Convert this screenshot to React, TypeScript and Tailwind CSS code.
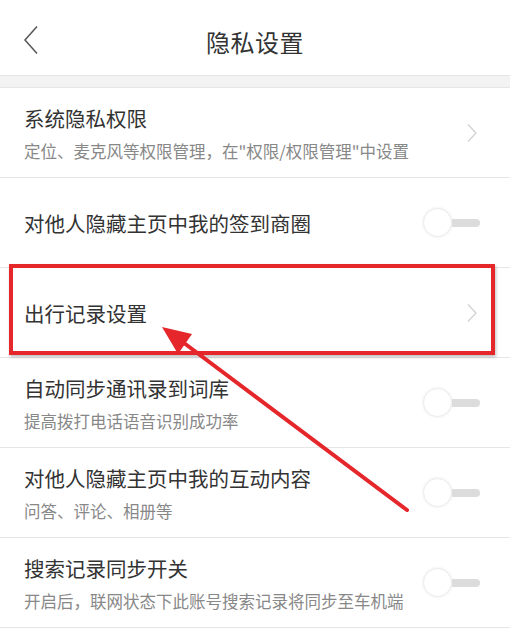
type Row = {
  title: string;
  desc?: string;
  kind: "link" | "toggle";
};

const rows: Row[] = [
  { title: "系统隐私权限", desc: '定位、麦克风等权限管理，在"权限/权限管理"中设置', kind: "link" },
  { title: "对他人隐藏主页中我的签到商圈", kind: "toggle" },
  { title: "出行记录设置", kind: "link" },
  { title: "自动同步通讯录到词库", desc: "提高拨打电话语音识别成功率", kind: "toggle" },
  { title: "对他人隐藏主页中我的互动内容", desc: "问答、评论、相册等", kind: "toggle" },
  { title: "搜索记录同步开关", desc: "开启后，联网状态下此账号搜索记录将同步至车机端", kind: "toggle" },
];

function Toggle() {
  return (
    <div className="flex items-center">
      <div className="h-[29px] w-[29px] rounded-full border border-[#ececec] bg-white shadow-[0_0_3px_rgba(0,0,0,0.08)]" />
      <div className="h-[8px] w-[28px] rounded-r-full bg-[#dcdcdc]" />
    </div>
  );
}

function Chevron() {
  return (
    <svg width="12" height="20" viewBox="0 0 12 20" fill="none" className="mr-[2px]">
      <polyline points="2,1.5 10,10 2,18.5" stroke="#d2d2d2" strokeWidth="1.3" />
    </svg>
  );
}

export default function App() {
  return (
    <div
      className="relative h-[628px] w-[510px] overflow-hidden bg-white"
      style={{ fontFamily: '"Noto Sans CJK SC", "Noto Sans", sans-serif' }}
    >
      <header className="relative flex h-[75px] items-center justify-center pt-[8px]">
        <svg width="16" height="30" viewBox="0 0 16 30" fill="none" className="absolute left-[23px] top-[25px]">
          <polyline points="14,1.5 2,15 14,28.5" stroke="#555" strokeWidth="1.5" />
        </svg>
        <h1 className="text-[24px] font-normal tracking-[0.5px] text-[#333]">隐私设置</h1>
      </header>
      <div className="h-[13px] border-y border-[#e6e6e6] bg-[#f3f3f3]" />

      <ul>
        {rows.map((row) => (
          <li key={row.title} className="flex h-[90px] items-center justify-between border-b border-[#e6e6e6] pl-[24px] pr-[30px]">
            <div className="flex flex-col gap-[8px]">
              <p className="text-[20.5px] leading-[28px] text-[#333]">{row.title}</p>
              {row.desc && <p className="text-[16.5px] leading-[22px] text-[#888]">{row.desc}</p>}
            </div>
            {row.kind === "link" ? <Chevron /> : <Toggle />}
          </li>
        ))}
      </ul>

      {/* annotation overlay */}
      <div className="pointer-events-none absolute left-[9px] top-[264px] h-[91px] w-[486px] border-[4px] border-[#e5262b] shadow-[1px_2px_3px_rgba(0,0,0,0.25)]" />
      <svg className="pointer-events-none absolute left-0 top-0" width="510" height="628" viewBox="0 0 510 628">
        <line x1="407" y1="510" x2="180" y2="340" stroke="#e5262b" strokeWidth="4" strokeLinecap="round" />
        <polygon points="162,327 192,334 178,354" fill="#e5262b" />
      </svg>
    </div>
  );
}
